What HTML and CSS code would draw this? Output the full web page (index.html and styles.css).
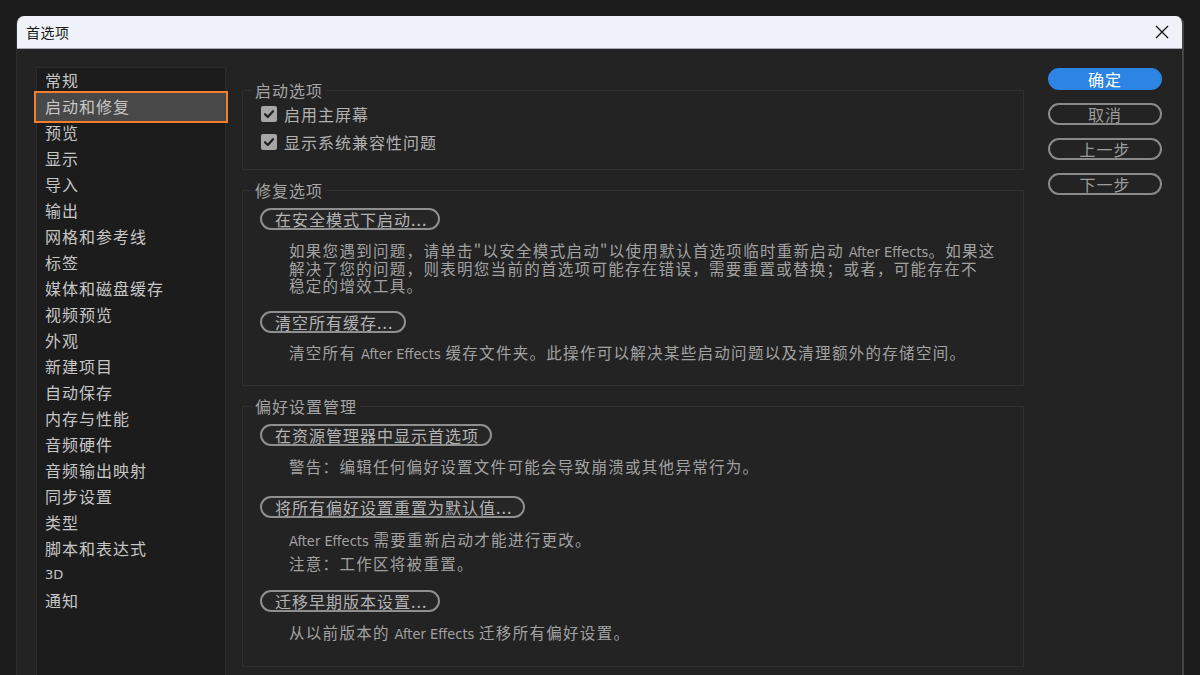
FILE: index.html
```html
<!DOCTYPE html>
<html lang="zh-CN">
<head>
    <meta charset="UTF-8">
    <meta name="viewport" content="width=device-width, initial-scale=1.0">
    <title>首选项</title>
    <link rel="stylesheet" href="styles.css">
</head>
<body>
    <div class="dialog">
        <div class="titlebar">
            <span class="title">首选项</span>
            <svg class="close" width="14" height="14" viewBox="0 0 14 14">
                <path d="M1 1 L13 13 M13 1 L1 13" stroke="#111" stroke-width="1.3" fill="none"/>
            </svg>
        </div>

        <div class="dialog-body">
            <ul class="nav">
                <li>常规</li>
                <li class="active">启动和修复</li>
                <li>预览</li>
                <li>显示</li>
                <li>导入</li>
                <li>输出</li>
                <li>网格和参考线</li>
                <li>标签</li>
                <li>媒体和磁盘缓存</li>
                <li>视频预览</li>
                <li>外观</li>
                <li>新建项目</li>
                <li>自动保存</li>
                <li>内存与性能</li>
                <li>音频硬件</li>
                <li>音频输出映射</li>
                <li>同步设置</li>
                <li>类型</li>
                <li>脚本和表达式</li>
                <li class="latin-item">3D</li>
                <li>通知</li>
            </ul>

            <div class="panel">
                <fieldset class="group group-startup">
                    <legend>启动选项</legend>
                    <label class="check">
                        <span class="box">
                            <svg width="16" height="16" viewBox="0 0 16 16"><path d="M4 8.2 L6.8 11 L12 5.2" stroke="#1e1e1e" stroke-width="2.2" fill="none" stroke-linecap="round" stroke-linejoin="round"/></svg>
                        </span>
                        启用主屏幕
                    </label>
                    <label class="check">
                        <span class="box">
                            <svg width="16" height="16" viewBox="0 0 16 16"><path d="M4 8.2 L6.8 11 L12 5.2" stroke="#1e1e1e" stroke-width="2.2" fill="none" stroke-linecap="round" stroke-linejoin="round"/></svg>
                        </span>
                        显示系统兼容性问题
                    </label>
                </fieldset>

                <fieldset class="group group-repair">
                    <legend>修复选项</legend>
                    <button class="pill">在安全模式下启动...</button>
                    <p class="note note-safe">如果您遇到问题，请单击"以安全模式启动"以使用默认首选项临时重新启动 <span class="latin">After Effects</span>。如果这<br>解决了您的问题，则表明您当前的首选项可能存在错误，需要重置或替换；或者，可能存在不<br>稳定的增效工具。</p>
                    <button class="pill pill-cache">清空所有缓存...</button>
                    <p class="note note-cache">清空所有 <span class="latin">After Effects</span> 缓存文件夹。此操作可以解决某些启动问题以及清理额外的存储空间。</p>
                </fieldset>

                <fieldset class="group group-prefs">
                    <legend>偏好设置管理</legend>
                    <button class="pill">在资源管理器中显示首选项</button>
                    <p class="note note-warn">警告：编辑任何偏好设置文件可能会导致崩溃或其他异常行为。</p>
                    <button class="pill pill-reset">将所有偏好设置重置为默认值...</button>
                    <p class="note note-reset"><span class="latin">After Effects</span> 需要重新启动才能进行更改。<br>注意：工作区将被重置。</p>
                    <button class="pill pill-migrate">迁移早期版本设置...</button>
                    <p class="note note-migrate">从以前版本的 <span class="latin">After Effects</span> 迁移所有偏好设置。</p>
                </fieldset>
            </div>

            <div class="actions">
                <button class="action primary">确定</button>
                <button class="action">取消</button>
                <button class="action">上一步</button>
                <button class="action">下一步</button>
            </div>
        </div>
    </div>
</body>
</html>
```

FILE: styles.css
```css
* {
    box-sizing: border-box;
    margin: 0;
    padding: 0;
}

html, body {
    height: 100%;
}

body {
    background-color: #1c1c1c;
    padding: 16px 16px 0 16px;
    overflow: hidden;
    font-family: "Noto Sans CJK SC", "Noto Sans", sans-serif;
}

.dialog {
    width: 1168px;
    height: 680px;
    background-color: #232323;
    border-radius: 8px 8px 0 0;
    border-left: 1px solid #2e2e2e;
    border-right: 2px solid #454545;
    overflow: hidden;
}

/* title bar */
.titlebar {
    height: 33px;
    background-color: #eff2f8;
    border-bottom: 1px solid #a9acb2;
    display: flex;
    align-items: center;
    justify-content: space-between;
    padding: 0 13px 0 9px;
}

.title {
    font-size: 14px;
    color: #1a1a1a;
    letter-spacing: 0.5px;
}

.close {
    display: block;
}

.dialog-body {
    display: flex;
    align-items: flex-start;
    padding: 18px 0 0 19px;
}

/* left category list */
.nav {
    list-style: none;
    width: 190px;
    height: 640px;
    flex-shrink: 0;
    background-color: #1c1c1c;
    border: 1px solid #2b2b2b;
}

.nav li {
    height: 26px;
    line-height: 24px;
    padding-left: 8px;
    font-size: 16px;
    letter-spacing: 1px;
    color: #c6c6c6;
    white-space: nowrap;
}

.nav li.latin-item {
    font-family: "DejaVu Sans", sans-serif;
    font-size: 13px;
    line-height: 26px;
    letter-spacing: 0;
}

.nav li.active {
    background-color: #484848;
    box-shadow: 0 0 0 1px #484848, 0 0 0 3px #f0802c;
}

/* centre panel */
.panel {
    width: 782px;
    margin-left: 16px;
    flex-shrink: 0;
}

.group {
    border: 1px solid #303030;
    padding: 0 0 0 17px;
    margin: 10px 0 0 0;
    min-width: 0;
}

.group-startup {
    margin-top: 13px;
    padding-bottom: 13px;
}

.group-repair {
    padding-bottom: 24px;
}

.group-prefs {
    padding-bottom: 25px;
}

.group legend {
    font-size: 16px;
    line-height: 20px;
    letter-spacing: 1px;
    color: #a4a4a4;
    padding: 0 3px;
    margin-left: -8px;
}

.check {
    display: flex;
    align-items: center;
    height: 28px;
    font-size: 16px;
    letter-spacing: 1px;
    color: #b2b2b2;
}

.box {
    width: 16px;
    height: 16px;
    border-radius: 2px;
    background-color: #a6a6a6;
    margin: 0 7px 0 1px;
    display: flex;
}

.pill {
    display: block;
    height: 22px;
    margin-top: 8px;
    padding: 0 11px 0 13px;
    border: 2px solid #8f8f8f;
    border-radius: 11px;
    background-color: #262626;
    color: #b4b4b4;
    font-family: "Noto Sans CJK SC", sans-serif;
    font-size: 16px;
    line-height: 18px;
    letter-spacing: 1px;
    white-space: nowrap;
}

.pill-cache {
    margin-top: 16px;
}

.pill-reset {
    margin-top: 20px;
}

.pill-migrate {
    margin-top: 15px;
}

.note {
    margin: 12px 0 0 29px;
    font-size: 15.5px;
    line-height: 17.5px;
    letter-spacing: 1.3px;
    color: #a2a2a2;
    white-space: nowrap;
}

.note-cache {
    margin-top: 11px;
}

.note-warn {
    margin-top: 12px;
}

.note-reset {
    margin-top: 9px;
    line-height: 24px;
}

.latin {
    font-family: "DejaVu Sans Condensed", "Liberation Sans", sans-serif;
    font-size: 14.5px;
    line-height: 14px;
    letter-spacing: 0;
}

/* right-hand buttons */
.actions {
    display: flex;
    flex-direction: column;
    gap: 13px;
    width: 114px;
    margin: 1px 0 0 24px;
}

.action {
    height: 22px;
    border: 2px solid #8a8a8a;
    border-radius: 11px;
    background-color: transparent;
    color: #9c9c9c;
    font-family: "Noto Sans CJK SC", sans-serif;
    font-size: 16px;
    line-height: 18px;
    letter-spacing: 1px;
}

.action.primary {
    background-color: #2d84e4;
    border-color: #2d84e4;
    color: #ffffff;
}
```
